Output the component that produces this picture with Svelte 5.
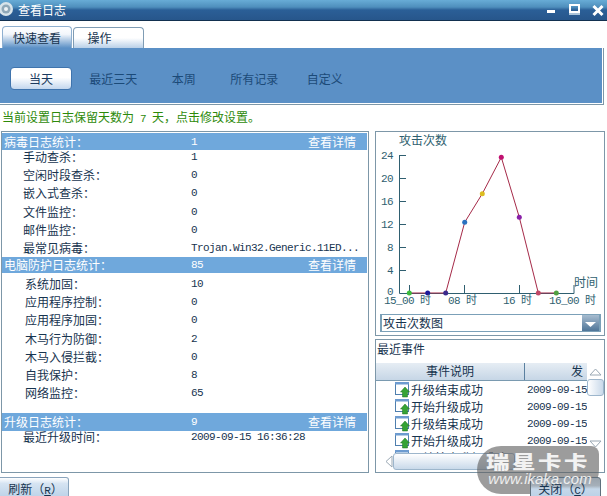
<script>
  const sections = [
    { name: '病毒日志统计：', value: '1', cls: 'first', rows: [
      ['手动查杀：', '1'], ['空闲时段查杀：', '0'], ['嵌入式查杀：', '0'], ['文件监控：', '0'], ['邮件监控：', '0'],
      ['最常见病毒：', 'Trojan.Win32.Generic.11ED...']
    ]},
    { name: '电脑防护日志统计：', value: '85', cls: 'second', rows: [
      ['系统加固：', '10'], ['应用程序控制：', '0'], ['应用程序加固：', '0'], ['木马行为防御：', '2'], ['木马入侵拦截：', '0'],
      ['自我保护：', '8'], ['网络监控：', '65']
    ]},
    { name: '升级日志统计：', value: '9', cls: 'third', rows: [
      ['最近升级时间：', '2009-09-15 16:36:28']
    ]}
  ];
  const nav = ['当天', '最近三天', '本周', '所有记录', '自定义'];
  const events = ['升级结束成功', '开始升级成功', '升级结束成功', '开始升级成功', '开始检查升级成功'];
  const yTicks = [[24,155,159],[20,178,182],[16,201,205],[12,224,228],[8,247,251],[4,270,274],[0,293,295]];
  const points = [
    [409.3,293,'#3dbb3d'],[427.7,293,'#1c1a9c'],[445.7,293,'#3b2a8c'],[464.7,222.3,'#2a72c0'],
    [482.3,193.7,'#dcbc20'],[501.3,157.3,'#c01070'],[519.3,217.3,'#8a20a8'],[538.3,293,'#c04a68'],[556.3,293,'#50a040']
  ];
  const line = points.map((p) => p[0] + ',' + p[1]).join(' ');
  const xLabels = [['15_00 时',384],['08 时',448],['16 时',503],['16_00 时',549]];
</script>

<div class="win">
  <header class="title">
    <svg class="logo" width="15" height="20" viewBox="0 0 15 20">
      <circle cx="6" cy="9" r="7" fill="#d8e4ea" />
      <circle cx="6" cy="9" r="4.5" fill="#8fa8b8" />
      <circle cx="6" cy="9" r="2" fill="#eef3f6" />
    </svg>
    <span class="title-text">查看日志</span>
    <div class="controls">
      <svg width="60" height="20" viewBox="0 0 60 20">
        <rect x="1" y="10" width="8" height="3" fill="#fff" />
        <rect x="24" y="5" width="9" height="7" fill="none" stroke="#fff" stroke-width="2" />
        <rect x="23" y="13" width="11" height="2" fill="#a9c3da" />
        <path d="M47.500 6l9 9M56.500 6l-9 9" stroke="#fff" stroke-width="3" />
      </svg>
    </div>
  </header>

  <div class="tabs">
    <div class="tab active">快速查看</div>
    <div class="tab">操作</div>
  </div>

  <nav class="panel">
    {#each nav as item, i}
      <div class="nav-item" class:current={i === 0}>{item}</div>
    {/each}
  </nav>

  <p class="notice">当前设置日志保留天数为<span class="mono gap">7</span>天，点击修改设置。</p>

  <main class="main">
    <section class="stats">
      {#each sections as s}
        <div class="stat-head {s.cls}">
          <span class="s-name">{s.name}</span>
          <span class="s-val mono">{s.value}</span>
          <span class="s-link">查看详情</span>
        </div>
        <div class="stat-rows {s.cls}">
          {#each s.rows as r}
            <div class="stat-row">
              <span class="r-name">{r[0]}</span>
              <span class="r-val mono">{r[1]}</span>
            </div>
          {/each}
        </div>
      {/each}
    </section>

    <div class="side">
      <section class="chart">
        <svg class="plot" width="228" height="182" viewBox="376 131 228 182">
          <text x="399" y="145" class="cap">攻击次数</text>
          <path d="M399.500 155V293.500H574V285" fill="none" stroke="#2f5f70" />
          {#each yTicks as t}
            <text x="393" y={t[2]} text-anchor="end" class="num">{t[0]}</text>
            {#if t[0] > 0}<path d="M399 {t[1] + 0.5}h7" stroke="#2f5f70" />{/if}
          {/each}
          <path d="M409.500 285v8M464.500 285v8M519.500 285v8" stroke="#2f5f70" />
          <polyline points={line} fill="none" stroke="#a52a48" stroke-width="1" />
          {#each points as p}
            <circle cx={p[0]} cy={p[1]} r="2.5" fill={p[2]} />
          {/each}
          <text x="574" y="287" class="cap">时间</text>
          {#each xLabels as l}
            <text x={l[1]} y="304" class="num">{l[0]}</text>
          {/each}
        </svg>
        <div class="select">
          <span>攻击次数图</span>
          <span class="drop">
            <svg width="17" height="16" viewBox="0 0 17 16"><path d="M3 7h11l-5.500 5z" fill="#fff" /></svg>
          </span>
        </div>
      </section>

      <section class="events">
        <div class="ev-title">最近事件</div>
        <div class="ev-body">
          <div class="ev-main">
            <div class="ev-head">
              <span class="c1">事件说明</span>
              <span class="c2">发</span>
            </div>
            <div class="ev-list">
              {#each events as e}
                <div class="ev-row">
                  <span class="c1b">
                    <svg class="ev-icon" width="17" height="17" viewBox="0 0 17 17">
                      <rect x="1.500" y="1.500" width="13" height="12" fill="#fff" stroke="#4f7fae" />
                      <rect x="1" y="1" width="14" height="2.500" fill="#6d9bd0" />
                      <path d="M11 6l4.500 5H13.500v5h-5v-5H6.500z" fill="#35a335" stroke="#1f6f1f" stroke-width="0.500" />
                    </svg>{e}
                  </span>
                  <span class="date mono">2009-09-15</span>
                </div>
              {/each}
            </div>
          </div>
          <div class="vscroll">
            <svg width="17" height="15" viewBox="0 0 17 15"><path d="M3 12l5.500-6 5.500 6z" fill="#fff" stroke="#9aa8b4" /></svg>
            <div class="thumb-v"></div>
            <svg width="17" height="15" viewBox="0 0 17 15"><path d="M3 3l5.500 6 5.500-6z" fill="#fff" stroke="#9aa8b4" /></svg>
          </div>
        </div>
        <div class="hscroll">
          <svg width="17" height="17" viewBox="0 0 17 17"><path d="M13 3l-6 5.500 6 5.500z" fill="#fff" stroke="#9aa8b4" /></svg>
          <div class="thumb-h"></div>
        </div>
      </section>
    </div>
  </main>

  <footer class="foot">
    <div class="btn refresh">刷新（<u>R</u>）</div>
    <div class="btn close">关闭（<u>C</u>）</div>
  </footer>

  <div class="mark">
    <span class="mark-cn">瑞星卡卡</span>
    <span class="mark-url">www.ikaka.com</span>
  </div>
</div>

<style>
  :global(body) { margin: 0; background: #fff; }
  .win {
    position: relative; width: 607px; height: 496px; overflow: hidden; background: #fff;
    display: flex; flex-direction: column;
    font: 12px/14px "Noto Sans CJK SC", sans-serif; color: #17344f;
  }
  .mono { font-family: "Liberation Mono", "Noto Sans CJK SC", monospace; font-size: 11px; letter-spacing: -0.6px; }
  .gap { margin: 0 6px; }
  .title {
    height: 20px; flex: none; display: flex; align-items: center; position: relative;
    border-bottom: 1px solid #12304f;
    background: linear-gradient(#68acd6 0, #4f8fbd 35%, #2b5f97 50%, #27568b 100%);
  }
  .logo { flex: none; }
  .title-text { margin-left: 3px; color: #fff; }
  .controls { margin-left: auto; margin-right: 1px; height: 20px; }
  .controls svg { display: block; }
  .tabs { display: flex; height: 22px; margin-top: 5px; padding-left: 2px; gap: 1px; flex: none; align-items: flex-end; }
  .tab {
    width: 71px; height: 21px; box-sizing: border-box; border: 1px solid #7f9cb4; border-bottom: 0;
    border-radius: 4px 4px 0 0; text-align: center; padding: 3px 18px 0 0;
    background: linear-gradient(#fff 50%, #b9d0e8);
  }
  .tab.active { height: 22px; width: 70px; padding: 4px 0 0; background: linear-gradient(#fff, #f2f6fb 35%, #5b90c6); border-color: #8fb0d0; }
  .panel {
    height: 57px; width: 604px; flex: none; box-sizing: border-box; background: #5b90c6;
    border-right: 1px solid #7d97a8; border-bottom: 1px solid #7d97a8;
    box-shadow: inset -1px -1px 0 #fff;
    display: flex; align-items: center; padding: 5px 0 0 6px;
    color: #1b4a78;
  }
  .nav-item { width: 70.500px; text-align: center; }
  .nav-item.current {
    width: 62px; height: 23px; line-height: 21px; box-sizing: border-box; margin: 0 6px 0 4px;
    color: #1b3a60; border: 1px solid #3f74ad; border-radius: 4px;
    background: linear-gradient(#fff 45%, #c3d7ee);
  }
  .notice { margin: 0; height: 26px; flex: none; padding: 5px 0 0 2px; box-sizing: border-box; color: #2d8a0a; }
  .main { display: flex; height: 342px; flex: none; gap: 6px; }
  .stats {
    width: 368px; margin-left: 1px; box-sizing: border-box; border: 1px solid #7d97a8;
    padding: 1px 1px 0 0;
  }
  .stat-head {
    display: flex; align-items: center; background: #6fa8dc; color: #fff; height: 17px; padding-left: 2px;
  }
  .stat-head.second { height: 16px; }
  .stat-head.third { height: 18px; margin-top: 9px; }
  .s-name { width: 187px; }
  .s-val { flex: 1; }
  .s-link { margin-right: 11px; }
  .stat-row { display: flex; height: 18.200px; }
  .stat-rows.first { padding: 0 0 0 21px; height: 107px; }
  .stat-rows.first .stat-row:last-child { height: 14px; }
  .stat-rows.second { padding: 4px 0 0 23px; }
  .stat-rows.third { padding: 0 0 0 21px; margin-top: -1px; }
  .r-name { flex: none; width: 168px; }
  .stat-rows.second .r-name { width: 166px; }
  .side { width: 230px; display: flex; flex-direction: column; gap: 3px; }
  .chart { height: 205px; box-sizing: border-box; border: 1px solid #7d97a8; flex: none; }
  .plot { display: block; margin-top: -1px; }
  .plot text { font-family: "Noto Sans CJK SC", sans-serif; fill: #2f5f70; }
  .plot .cap { font-size: 12px; }
  .plot .num { font-size: 11px; letter-spacing: -0.6px; font-family: "Liberation Mono", "Noto Sans CJK SC", monospace; }
  .select {
    margin: 1px 0 0 4px; width: 221px; height: 18px; box-sizing: border-box; border: 1px solid #7ba0b8;
    border-width: 1px 2px; background: #fff; display: flex; align-items: center; justify-content: space-between; padding-left: 1px;
  }
  .drop { width: 17px; height: 16px; background: linear-gradient(#a7bcd0, #4f7598); display: block; }
  .drop svg { display: block; }
  .events { flex: 1; border: 1px solid #7d97a8; box-sizing: border-box; height: 134px; overflow: hidden; display: flex; flex-direction: column; }
  .ev-title { height: 23px; flex: none; padding: 2px 0 0 1px; box-sizing: border-box; }
  .ev-body { display: flex; height: 90px; flex: none; }
  .ev-main { width: 211px; flex: none; overflow: hidden; }
  .ev-head { display: flex; height: 18px; box-sizing: border-box; background: linear-gradient(#e6edf4, #c6d6e6); border-bottom: 1px solid #7a9ab0; }
  .c1 { width: 149px; flex: none; text-align: center; border-right: 1px solid #5a80a0; padding-top: 1px; box-sizing: border-box; }
  .c2 { padding: 1px 0 0 46px; white-space: nowrap; }
  .ev-list { height: 72px; overflow: hidden; }
  .ev-row { display: flex; height: 17px; align-items: center; white-space: nowrap; }
  .c1b { width: 151px; flex: none; display: flex; align-items: center; padding-left: 18px; box-sizing: border-box; }
  .ev-icon { flex: none; }
  .date { width: 60px; overflow: hidden; }
  .vscroll { width: 17px; flex: none; display: flex; flex-direction: column; align-items: center; background: #fff; }
  .vscroll svg { flex: none; display: block; }
  .thumb-v { width: 17px; height: 17px; flex: none; box-sizing: border-box; margin: 1px 0 42px; border: 1px solid #9db6cc; border-radius: 3px; background: linear-gradient(90deg, #fff, #c9d9ea); }
  .hscroll { height: 17px; flex: none; display: flex; align-items: center; padding-left: 3px; }
  .thumb-h { width: 122px; height: 17px; box-sizing: border-box; margin-left: -3px; border: 1px solid #9db6cc; border-radius: 3px; background: linear-gradient(#fff, #c9d9ea); }
  .foot { display: flex; justify-content: space-between; margin-top: 4px; height: 19px; padding-right: 6px; flex: none; position: relative; z-index: 2; }
  .btn {
    height: 24px; box-sizing: border-box; border: 1px solid #5f6f7c; border-radius: 0 3px 0 0;
    background: linear-gradient(#9aa3ac, #a6b0ba 35%, #c6d8ea 50%, #b7cfe6); text-align: center; padding-top: 4px;
  }
  .refresh { width: 69px; border: 1px solid #8aa4bc; border-left: 0; background: linear-gradient(#fff, #d6e4f2 25%, #b7cfe6); padding-left: 3px; }
  .close { width: 71px; }
  .btn u { font-family: "Liberation Mono", monospace; font-size: 11px; }
  .mark {
    position: absolute; left: 477px; top: 446px; width: 122px; height: 48px; border-radius: 24px 8px 24px 24px;
    background: rgba(95, 95, 95, .62); color: #fff; display: flex; flex-direction: column; align-items: center;
    font-family: "Liberation Sans", sans-serif; pointer-events: none;
  }
  .mark-cn { font: 900 18px/20px "Noto Sans CJK SC", sans-serif; letter-spacing: 2px; margin: 5px 0 0 0; color: #f2f2f2; transform: scaleX(1.3); }
  .mark-url { position: relative; z-index: 3; font-style: italic; font-size: 15px; line-height: 16px; margin-left: 4px; color: #eee; }
</style>
